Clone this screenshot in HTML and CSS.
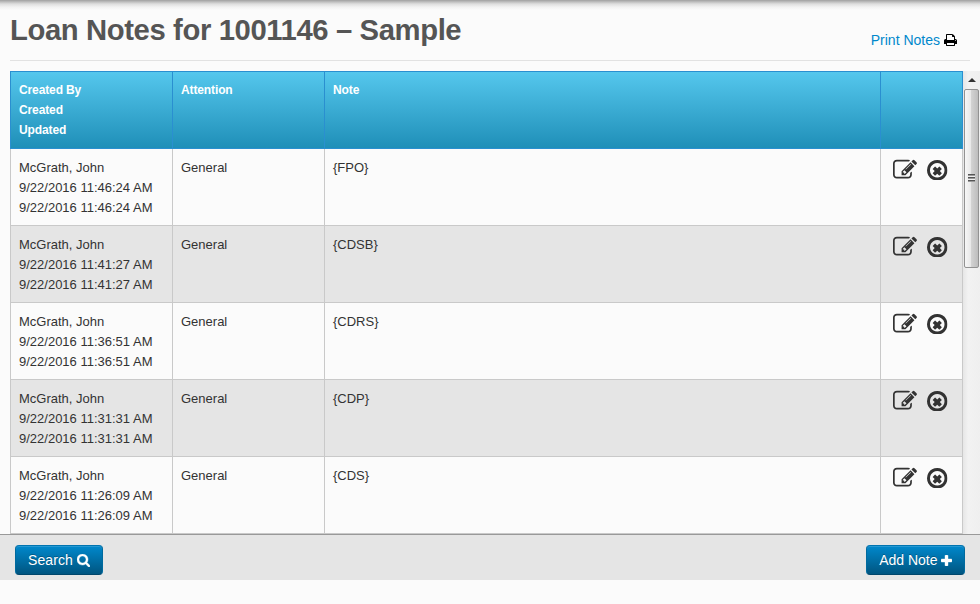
FILE: index.html
```
<!DOCTYPE html>
<html lang="en">
<head>
<meta charset="utf-8">
<title>Loan Notes</title>
<link rel="stylesheet" href="styles.css">
</head>
<body>
<svg class="defs" aria-hidden="true">
  <symbol id="edit" viewBox="0 0 1792 1792"><path d="M888 1184l116-116-152-152-116 116v56h96v96h56zm440-720q-16-16-33 1l-350 350q-17 17-1 33t33-1l350-350q17-17 1-33zm80 594v190q0 119-84.5 203.5t-203.5 84.5h-832q-119 0-203.5-84.5t-84.5-203.5v-832q0-119 84.5-203.5t203.5-84.5h832q63 0 117 25 15 7 18 23 3 17-9 29l-49 49q-14 14-32 8-23-6-45-6h-832q-66 0-113 47t-47 113v832q0 66 47 113t113 47h832q66 0 113-47t47-113v-126q0-13 9-22l64-64q15-15 35-7t20 29zm-96-738l288 288-672 672h-288v-288zm444 132l-92 92-288-288 92-92q28-28 68-28t68 28l152 152q28 28 28 68t-28 68z"/></symbol>
  <symbol id="remove" viewBox="0 0 1536 1536"><path d="M1097 1013l-146 146q-10 10-23 10t-23-10l-137-137-137 137q-10 10-23 10t-23-10l-146-146q-10-10-10-23t10-23l137-137-137-137q-10-10-10-23t10-23l146-146q10-10 23-10t23 10l137 137 137-137q10-10 23-10t23 10l146 146q10 10 10 23t-10 23l-137 137 137 137q10 10 10 23t-10 23zm215-245q0-148-73-273t-198-198-273-73-273 73-198 198-73 273 73 273 198 198 273 73 273-73 198-198 73-273zm224 0q0 209-103 385.5t-279.5 279.5-385.5 103-385.5-103-279.5-279.5-103-385.5 103-385.5 279.5-279.5 385.5-103 385.5 103 279.5 279.5 103 385.5z"/></symbol>
</svg>
<div class="page">
  <header class="head">
    <h1>Loan Notes for 1001146 – Sample</h1>
    <a class="print"><span>Print Notes</span><svg viewBox="64 128 1664 1536"><path d="M448 1536h896v-256h-896v256zm0-640h896v-384h-160q-40 0-68-28t-28-68v-160h-640v640zm1152 64q0-26-19-45t-45-19-45 19-19 45 19 45 45 19 45-19 19-45zm128 0v416q0 13-9.5 22.5t-22.5 9.5h-224v160q0 40-28 68t-68 28h-960q-40 0-68-28t-28-68v-160h-224q-13 0-22.5-9.5t-9.5-22.5v-416q0-79 56.5-135.5t135.5-56.5h64v-544q0-40 28-68t68-28h672q40 0 88 20t76 48l152 152q28 28 48 76t20 88v256h64q79 0 135.5 56.5t56.5 135.5z"/></svg></a>
  </header>
  <main class="scroller">
    <table>
      <colgroup><col class="c-by"><col class="c-att"><col class="c-note"><col class="c-act"></colgroup>
      <thead><tr><th>Created By<br>Created<br>Updated</th><th>Attention</th><th>Note</th><th></th></tr></thead>
      <tbody>
        <tr><td>McGrath, John<br>9/22/2016 11:46:24 AM<br>9/22/2016 11:46:24 AM</td><td>General</td><td>{FPO}</td><td><div class="acts"><svg class="edit"><use href="#edit"/></svg><svg class="remove"><use href="#remove"/></svg></div></td></tr>
        <tr><td>McGrath, John<br>9/22/2016 11:41:27 AM<br>9/22/2016 11:41:27 AM</td><td>General</td><td>{CDSB}</td><td><div class="acts"><svg class="edit"><use href="#edit"/></svg><svg class="remove"><use href="#remove"/></svg></div></td></tr>
        <tr><td>McGrath, John<br>9/22/2016 11:36:51 AM<br>9/22/2016 11:36:51 AM</td><td>General</td><td>{CDRS}</td><td><div class="acts"><svg class="edit"><use href="#edit"/></svg><svg class="remove"><use href="#remove"/></svg></div></td></tr>
        <tr><td>McGrath, John<br>9/22/2016 11:31:31 AM<br>9/22/2016 11:31:31 AM</td><td>General</td><td>{CDP}</td><td><div class="acts"><svg class="edit"><use href="#edit"/></svg><svg class="remove"><use href="#remove"/></svg></div></td></tr>
        <tr><td>McGrath, John<br>9/22/2016 11:26:09 AM<br>9/22/2016 11:26:09 AM</td><td>General</td><td>{CDS}</td><td><div class="acts"><svg class="edit"><use href="#edit"/></svg><svg class="remove"><use href="#remove"/></svg></div></td></tr>
      </tbody>
    </table>
    <div class="bar"><div class="up"></div><div class="thumb"><i></i></div></div>
  </main>
  <footer class="foot">
    <button>Search<svg viewBox="64 128 1664 1664"><path d="M1216 832q0-185-131.5-316.5t-316.5-131.5-316.5 131.5-131.5 316.5 131.5 316.5 316.5 131.5 316.5-131.5 131.5-316.5zm512 832q0 52-38 90t-90 38q-54 0-90-38l-343-342q-179 124-399 124-143 0-273.5-55.5t-225-150-150-225-55.5-273.5 55.5-273.5 150-225 225-150 273.5-55.5 273.5 55.5 225 150 150 225 55.5 273.5q0 220-124 399l343 343q37 37 37 90z"/></svg></button>
    <button class="add">Add Note<svg viewBox="192 128 1408 1408"><path d="M1600 736v192q0 40-28 68t-68 28h-416v416q0 40-28 68t-68 28h-192q-40 0-68-28t-28-68v-416h-416q-40 0-68-28t-28-68v-192q0-40 28-68t68-28h416v-416q0-40 28-68t68-28h192q40 0 68 28t28 68v416h416q40 0 68 28t28 68z"/></svg></button>
  </footer>
</div>
</body>
</html>
```
FILE: styles.css
```
* { box-sizing: border-box; }
body {
  margin: 0;
  height: 604px;
  overflow: hidden;
  background: linear-gradient(#a0a0a0 0, #c0c0c0 2px, #dedede 4px, #f2f2f2 7px, #fbfbfb 10px);
  color: #333;
  font: 13px/20px "Liberation Sans", Arial, sans-serif;
}
svg { display: block; fill: currentColor; flex: none; }
.defs { display: none; }
.head {
  display: flex;
  justify-content: space-between;
  height: 61px;
  margin: 0 10px;
  border-bottom: 1px solid #e2e2e2;
}
h1 {
  margin: 10px 0 0;
  color: #555;
  font-size: 29.25px;
  letter-spacing: -.39px;
  line-height: 40px;
}
.print {
  display: flex;
  align-items: center;
  gap: 4px;
  height: 20px;
  margin: 30px 13px 0 0;
  color: #08c;
  font-size: 14px;
}
.print svg { width: 13px; height: 12px; color: #000; }
.scroller {
  display: flex;
  justify-content: space-between;
  height: 463px;
  margin-top: 10px;
  padding-left: 10px;
  overflow: hidden;
}
table {
  width: 953px;
  height: 463px;
  flex: none;
  border-collapse: separate;
  border-spacing: 0;
  table-layout: fixed;
  border-left: 1px solid #c9c9c9;
}
.c-by { width: 162px; }
.c-att { width: 152px; }
.c-note { width: 556px; }
th, td {
  padding: 8px;
  text-align: left;
  vertical-align: top;
}
th {
  height: 78px;
  border: solid #2a8fd0;
  border-width: 1px 1px 1px 0;
  background: linear-gradient(#55c7ed, #1f8fb8);
  color: #fff;
  font-size: 12px;
  letter-spacing: -.12px;
}
th:first-child { box-shadow: -1px 0 #2a8fd0; }
td {
  height: 77px;
  padding: 9px 8px 7px;
  border: solid #c9c9c9;
  border-width: 0 1px 1px 0;
}
tbody tr:nth-child(even) { background: #e5e5e5; }
.acts { display: flex; padding-left: 4px; }
.edit { width: 24px; height: 24px; }
.remove { width: 20.5px; height: 20.5px; margin: 1.5px 0 0 10px; }
.bar { width: 17px; background: linear-gradient(90deg, #e6e6e6, #f2f2f2 30%, #efefef); }
.up { height: 18px; padding: 7px 0 0 5px; }
.up::before {
  content: "";
  display: block;
  width: 0;
  border: solid transparent;
  border-width: 0 4px 4px;
  border-bottom-color: #333;
}
.thumb {
  display: flex;
  align-items: center;
  justify-content: center;
  width: 15px;
  height: 179px;
  margin-left: 1px;
  padding-bottom: 2px;
  border: 1px solid #929292;
  border-radius: 2px;
  background: linear-gradient(90deg, #f7f7f7, #e8e8e8 45%, #d2d2d2 50%, #bdbdbd);
}
.thumb i {
  width: 7px;
  height: 8px;
  background: repeating-linear-gradient(#555 0 1px, #999 1px 2px, #eee 2px 3px);
}
.foot {
  display: flex;
  justify-content: space-between;
  height: 46px;
  padding: 10px 15px;
  border-top: 1px solid #999;
  background: #e5e5e5;
}
button {
  display: flex;
  align-items: center;
  gap: 4px;
  height: 30px;
  padding: 0 12px;
  border: 1px solid;
  border-color: #0074b0 #006a9e #00466b;
  border-radius: 4px;
  background: linear-gradient(#08c, #005580);
  box-shadow: inset 0 1px rgba(255,255,255,.15);
  color: #fff;
  font: 14px/20px "Liberation Sans", Arial, sans-serif;
  letter-spacing: .1px;
  text-shadow: 0 -1px rgba(0,0,0,.25);
}
button svg { width: 13px; height: 13px; stroke: currentColor; stroke-width: 50; }
.add { gap: 3.5px; letter-spacing: 0; }
.add svg { width: 11px; height: 11px; }
```
